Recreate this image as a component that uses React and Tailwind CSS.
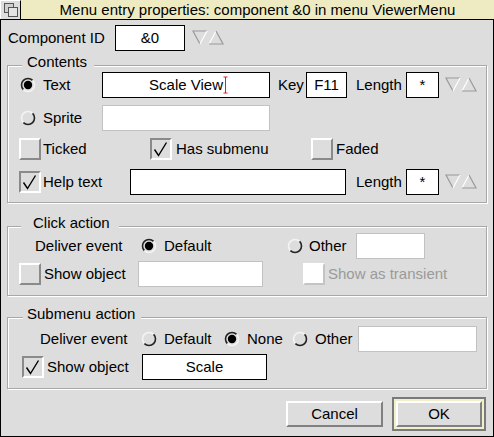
import React from "react";

const Radio = ({ on }) => (
  <svg width="16" height="16" viewBox="0 0 16 16" className="shrink-0">
    <path d="M12.6 3.4 A6.5 6.5 0 0 0 3.4 12.6" fill="none" stroke={on ? "#222" : "#f4f4f4"} strokeWidth="1.6" />
    <path d="M12.6 3.4 A6.5 6.5 0 0 1 3.4 12.6" fill="none" stroke={on ? "#f4f4f4" : "#222"} strokeWidth="1.6" />
    {on && <circle cx="8" cy="8" r="4.2" fill="#000" />}
  </svg>
);

const Check = ({ on, disabled }) => (
  <div
    className={`w-[22px] h-[22px] shrink-0 border-2 flex items-center justify-center ${
      disabled
        ? "bg-white border-t-white border-l-white border-b-[#c4c4c4] border-r-[#c4c4c4]"
        : on
        ? "border-t-[#8a8a8a] border-l-[#8a8a8a] border-b-white border-r-white"
        : "border-t-white border-l-white border-b-[#8a8a8a] border-r-[#8a8a8a]"
    }`}
  >
    {on && (
      <svg width="18" height="18" viewBox="0 0 18 18">
        <path d="M2.5 9.5 L6.5 15.5 L14.5 2.5" fill="none" stroke="#000" strokeWidth="1.4" />
      </svg>
    )}
  </div>
);

const Field = ({ w, light, children }) => (
  <div
    className={`${w} h-[26px] shrink-0 bg-white border flex items-center justify-center ${
      light ? "border-[#c2c2c2]" : "border-black"
    }`}
  >
    {children}
  </div>
);

const Arrows = () => (
  <svg width="33" height="16" viewBox="0 0 33 16" className="shrink-0">
    <path d="M8 14 L1 1 L15 1" fill="none" stroke="#9a9a9a" strokeWidth="1.2" />
    <path d="M15 1 L8 14" fill="none" stroke="#fff" strokeWidth="1.2" />
    <path d="M24 1 L17 14" fill="none" stroke="#fff" strokeWidth="1.2" />
    <path d="M24 1 L31 14 L17 14" fill="none" stroke="#9a9a9a" strokeWidth="1.2" />
  </svg>
);

const Group = ({ title, legendClass, children, className }) => (
  <fieldset
    className={`mx-[6px] pl-[11px] border border-[#a8a8a8] shadow-[inset_1px_1px_0_#fff,1px_1px_0_#fff] ${className}`}
  >
    <legend className={`bg-[#dddddd] leading-[8px] pb-[6px] ${legendClass}`}>{title}</legend>
    {children}
  </fieldset>
);

export default function App() {
  return (
    <div
      className="w-[494px] h-[437px] bg-[#dddddd] text-black text-[15px] flex flex-col border-b border-black"
      style={{ fontFamily: '"Liberation Sans", Arial, sans-serif' }}
    >
      {/* title bar */}
      <div className="h-[20px] flex border-b border-black shrink-0">
        <div className="w-[21px] h-full bg-[#dddddd] border-r border-black flex items-center justify-center border-t border-l border-t-white border-l-white">
          <svg width="16" height="16" viewBox="0 0 16 16">
            <rect x="1.5" y="1.5" width="9" height="9" fill="#cfcfcf" stroke="#555" />
            <rect x="5.5" y="5.5" width="9" height="9" fill="#e4e4e4" stroke="#555" />
          </svg>
        </div>
        <div className="flex-1 bg-[#eeebc3] flex items-center justify-center leading-none">
          Menu entry properties: component &amp;0 in menu ViewerMenu
        </div>
      </div>

      <div className="flex-1 flex flex-col border-l border-r border-black">
        {/* component id */}
        <div className="flex items-center h-[26px] mt-[5px] pl-[7px]">
          <span className="w-[107px]">Component ID</span>
          <Field w="w-[70px]">&amp;0</Field>
          <div className="ml-[7px]">
            <Arrows />
          </div>
        </div>

        {/* contents */}
        <Group title="Contents" legendClass="ml-[3px] pl-[5px] pr-[7px]" className="mt-[7px] pb-[7px]">
          <div className="flex items-center h-[26px]">
            <div className="w-[83px] flex items-center pl-[1px]">
              <Radio on />
              <span className="ml-[7px]">Text</span>
            </div>
            <Field w="w-[168px]">
              <span>Scale View</span>
              <svg width="5" height="18" viewBox="0 0 5 18" className="-mr-[5px]">
                <path d="M2.5 1 V17 M0.5 1 H4.5 M0.5 17 H4.5" stroke="#e02020" strokeWidth="1" fill="none" />
              </svg>
            </Field>
            <span className="ml-[8px] w-[28px]">Key</span>
            <Field w="w-[41px]">F11</Field>
            <span className="ml-[9px] w-[50px]">Length</span>
            <Field w="w-[33px]">*</Field>
            <div className="ml-[6px]">
              <Arrows />
            </div>
          </div>

          <div className="flex items-center h-[26px] mt-[7px]">
            <div className="w-[83px] flex items-center pl-[1px]">
              <Radio />
              <span className="ml-[7px]">Sprite</span>
            </div>
            <Field w="w-[168px]" light />
          </div>

          <div className="flex items-center h-[22px] mt-[7px]">
            <div className="w-[131px] flex items-center">
              <Check />
              <span className="ml-[2px]">Ticked</span>
            </div>
            <div className="w-[161px] flex items-center">
              <Check on />
              <span className="ml-[4px]">Has submenu</span>
            </div>
            <Check />
            <span className="ml-[3px]">Faded</span>
          </div>

          <div className="flex items-center h-[26px] mt-[9px]">
            <div className="w-[111px] flex items-center">
              <Check on />
              <span className="ml-[2px]">Help text</span>
            </div>
            <Field w="w-[216px]" />
            <span className="ml-[10px] w-[50px]">Length</span>
            <Field w="w-[33px]">*</Field>
            <div className="ml-[6px]">
              <Arrows />
            </div>
          </div>
        </Group>

        {/* click action */}
        <Group title="Click action" legendClass="ml-[2px] pl-[12px] pr-[9px]" className="mt-[16px] pb-[8px]">
          <div className="flex items-center h-[26px]">
            <span className="w-[122px] pl-[16px]">Deliver event</span>
            <div className="w-[146px] flex items-center">
              <Radio on />
              <span className="ml-[7px]">Default</span>
            </div>
            <div className="w-[69px] flex items-center">
              <Radio />
              <span className="ml-[6px]">Other</span>
            </div>
            <Field w="w-[69px]" light />
          </div>
          <div className="flex items-center h-[26px] mt-[2px]">
            <div className="w-[119px] flex items-center">
              <Check />
              <span className="ml-[3px]">Show object</span>
            </div>
            <Field w="w-[125px]" light />
            <div className="ml-[40px]">
              <Check disabled />
            </div>
            <span className="ml-[3px] text-[#9a9a9a]">Show as transient</span>
          </div>
        </Group>

        {/* submenu action */}
        <Group title="Submenu action" legendClass="ml-[4px] pl-[4px] pr-[6px]" className="mt-[14px] pb-[8px]">
          <div className="flex items-center h-[26px] mt-[2px]">
            <span className="w-[122px] pl-[21px]">Deliver event</span>
            <div className="w-[83px] flex items-center">
              <Radio />
              <span className="ml-[7px]">Default</span>
            </div>
            <div className="w-[68px] flex items-center">
              <Radio on />
              <span className="ml-[7px]">None</span>
            </div>
            <div className="w-[66px] flex items-center">
              <Radio />
              <span className="ml-[7px]">Other</span>
            </div>
            <Field w="w-[119px]" light />
          </div>
          <div className="flex items-center h-[26px] mt-[2px]">
            <div className="w-[123px] flex items-center pl-[3px]">
              <Check on />
              <span className="ml-[3px]">Show object</span>
            </div>
            <Field w="w-[125px]">Scale</Field>
          </div>
        </Group>

        {/* buttons */}
        <div className="flex items-center justify-end h-[34px] mt-[8px] pr-[7px] gap-[9px]">
          <button className="w-[97px] h-[26px] bg-[#dddddd] border-2 border-t-white border-l-white border-b-[#808080] border-r-[#808080] flex items-center justify-center">
            Cancel
          </button>
          <div className="w-[94px] h-[34px] border-2 border-[#7a7a7a] p-[2px] bg-[#f2f0cc]">
            <button className="w-full h-full bg-[#dddddd] border-2 border-t-white border-l-white border-b-[#808080] border-r-[#808080] flex items-center justify-center">
              OK
            </button>
          </div>
        </div>
      </div>
    </div>
  );
}
